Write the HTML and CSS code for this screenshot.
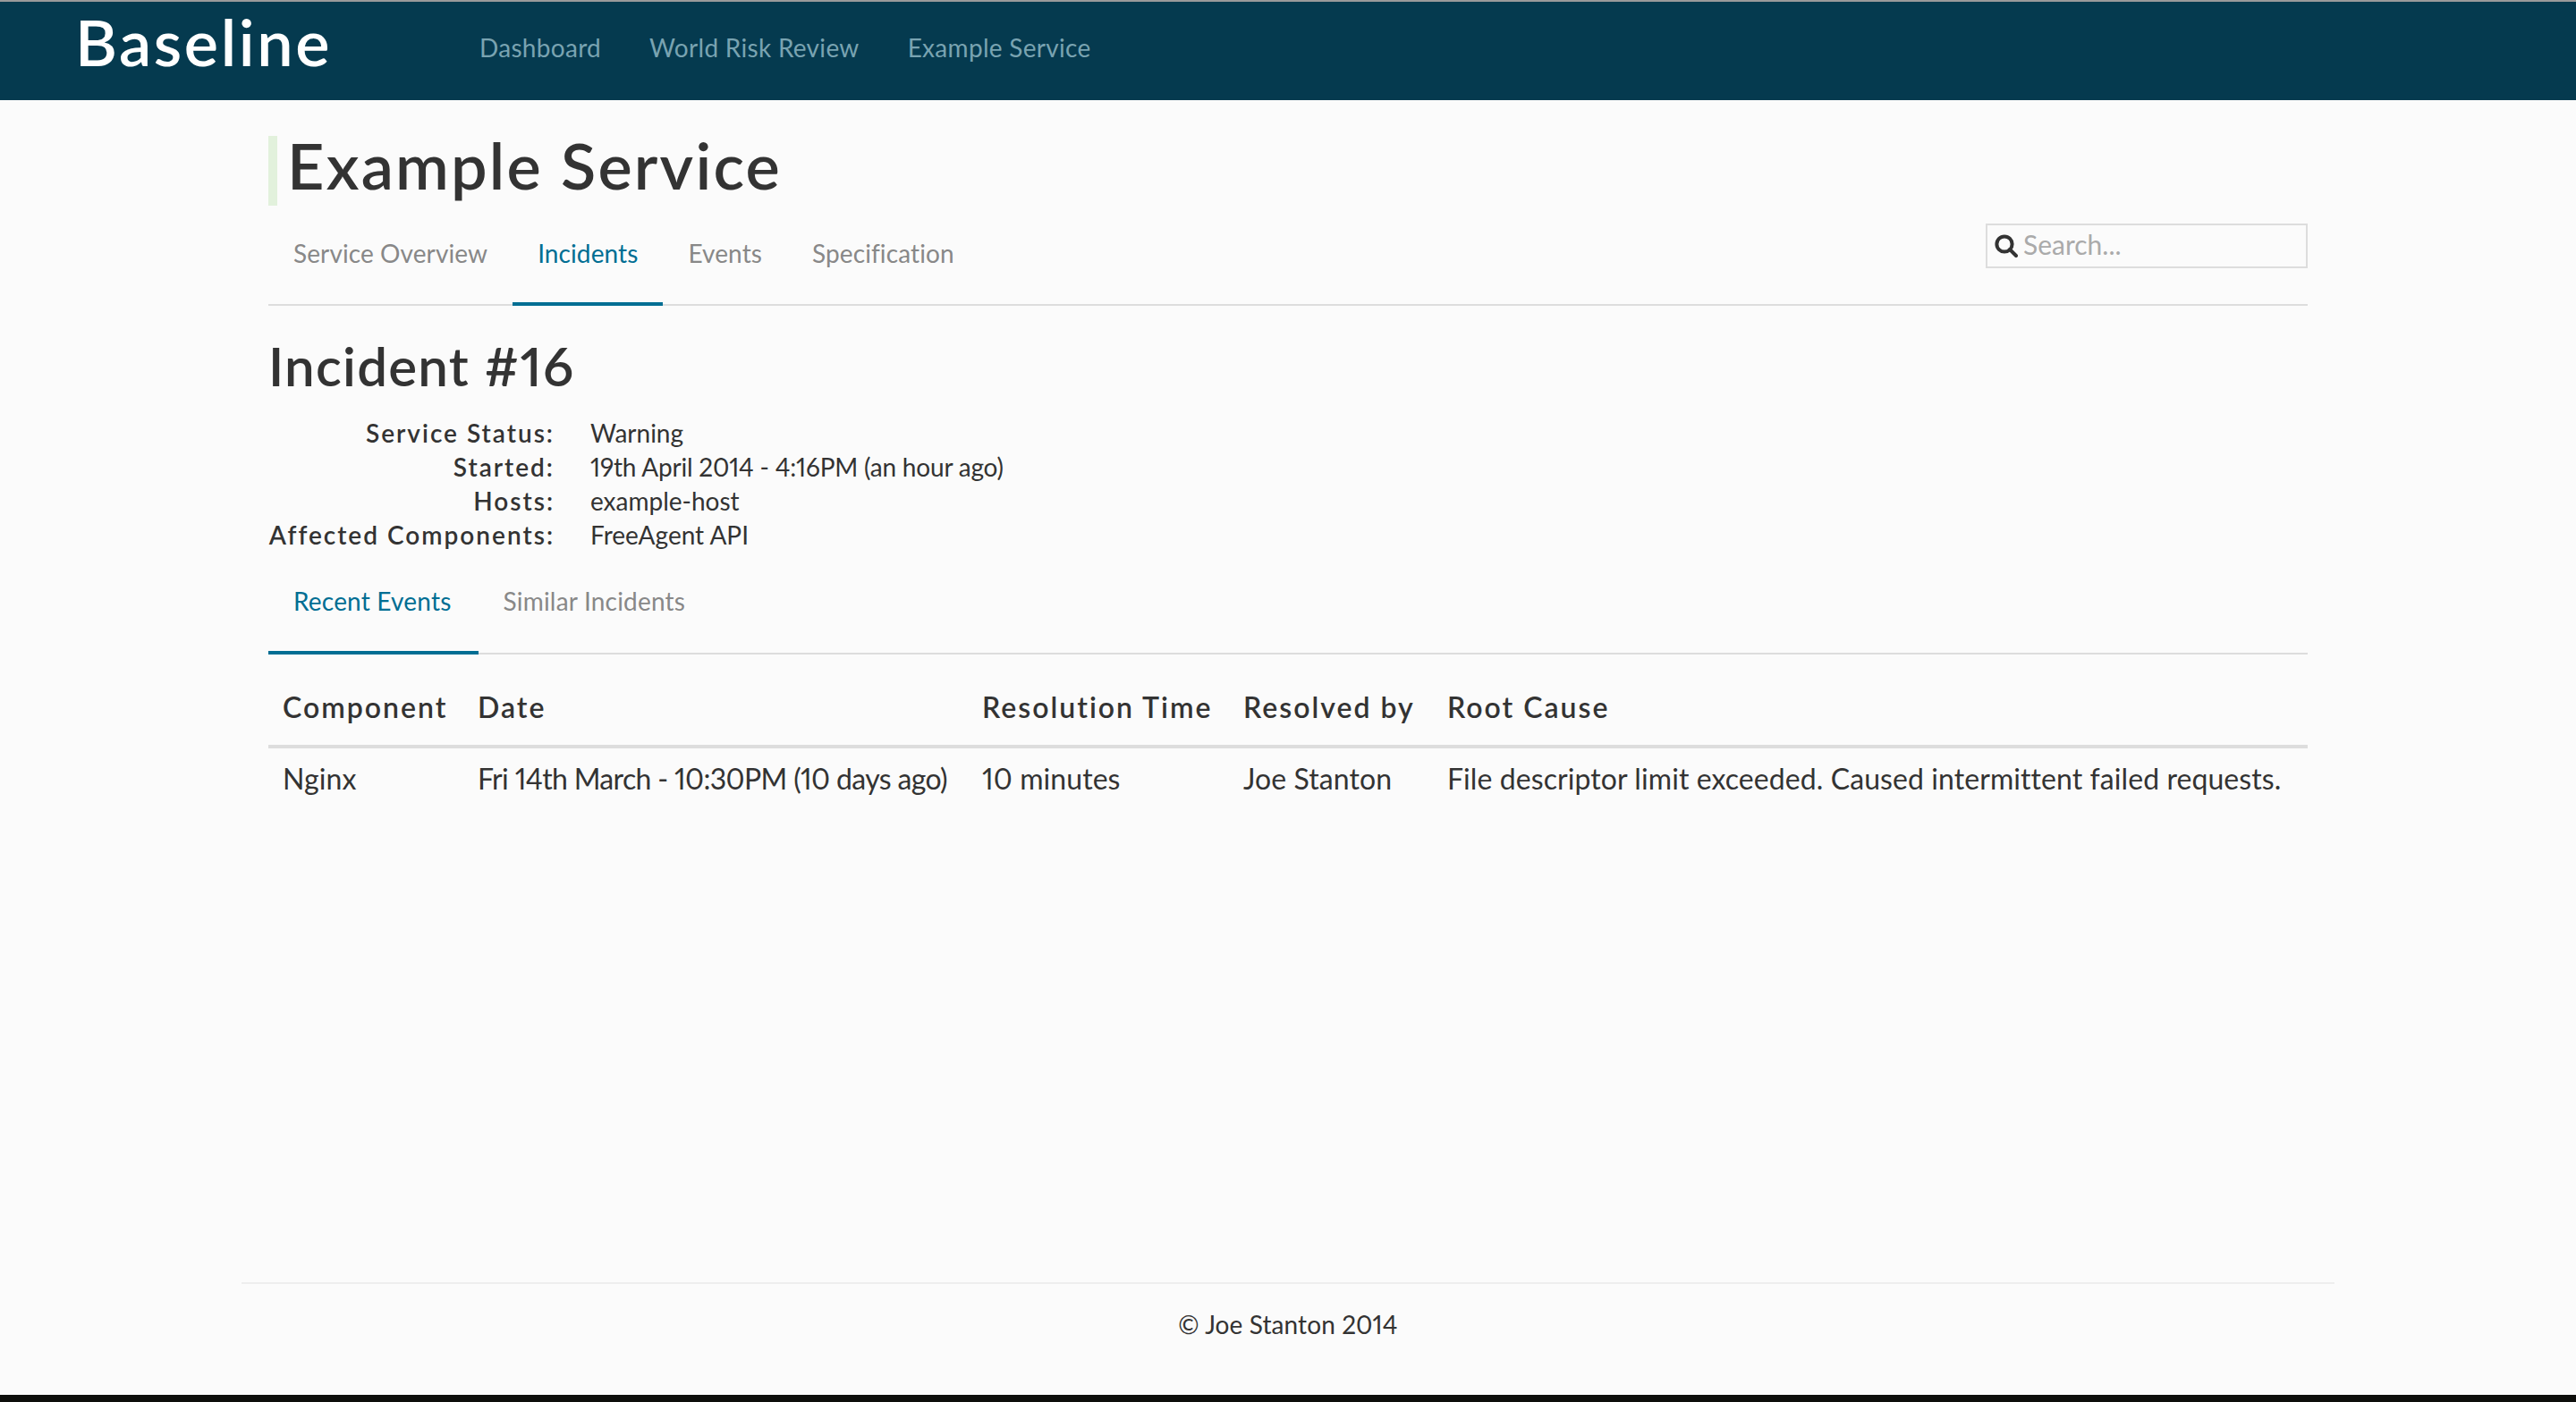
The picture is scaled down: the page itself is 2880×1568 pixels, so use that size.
FILE: index.html
```html
<!DOCTYPE html>
<html lang="en">
<head>
    <meta charset="UTF-8">
    <meta name="viewport" content="width=device-width, initial-scale=1.0">
    <title>Baseline</title>
    <link rel="stylesheet" href="styles.css">
</head>
<body>
    <header class="topbar">
        <a href="#" class="brand">Baseline</a>
        <nav class="topnav">
            <a href="#">Dashboard</a>
            <a href="#">World Risk Review</a>
            <a href="#">Example Service</a>
        </nav>
    </header>

    <main class="container">
        <h1 class="service-title">Example Service</h1>

        <div class="tabs service-tabs">
            <a href="#" class="tab">Service Overview</a>
            <a href="#" class="tab active">Incidents</a>
            <a href="#" class="tab">Events</a>
            <a href="#" class="tab">Specification</a>
            <div class="search">
                <svg class="search-icon" viewBox="0 0 26 26" aria-hidden="true">
                    <circle cx="11" cy="11" r="8.6" fill="none" stroke="#333" stroke-width="4"/>
                    <path d="M17 17l7 7" fill="none" stroke="#333" stroke-width="4" stroke-linecap="round"/>
                </svg>
                <input type="text" class="search-input" placeholder="Search...">
            </div>
        </div>

        <h2 class="incident-title">Incident #16</h2>

        <dl class="details">
            <dt>Service Status:</dt>
            <dd>Warning</dd>
            <dt>Started:</dt>
            <dd class="date-text">19th April 2014 - 4:16PM (an hour ago)</dd>
            <dt>Hosts:</dt>
            <dd>example-host</dd>
            <dt>Affected Components:</dt>
            <dd>FreeAgent API</dd>
        </dl>

        <div class="tabs incident-tabs">
            <a href="#" class="tab active">Recent Events</a>
            <a href="#" class="tab">Similar Incidents</a>
        </div>

        <table class="events">
            <thead>
                <tr>
                    <th class="col-component">Component</th>
                    <th class="col-date">Date</th>
                    <th class="col-time">Resolution Time</th>
                    <th class="col-by">Resolved by</th>
                    <th>Root Cause</th>
                </tr>
            </thead>
            <tbody>
                <tr>
                    <td>Nginx</td>
                    <td class="event-date">Fri 14th March - 10:30PM (10 days ago)</td>
                    <td>10 minutes</td>
                    <td>Joe Stanton</td>
                    <td>File descriptor limit exceeded. Caused intermittent failed requests.</td>
                </tr>
            </tbody>
        </table>
    </main>

    <footer class="footer">© Joe Stanton 2014</footer>
</body>
</html>
```

FILE: styles.css
```css
* {
    box-sizing: border-box;
}
body {
    display: flex;
    flex-direction: column;
    min-height: 100vh;
    margin: 0;
    border-bottom: 8px solid #0e0f0c;
    background-color: #fbfbfb;
    color: #333;
    font-family: Lato, "Open Sans", sans-serif;
    font-size: 28px;
    font-variant-numeric: proportional-nums;
}
a {
    text-decoration: none;
}

.topbar {
    display: flex;
    align-items: flex-start;
    height: 112px;
    padding-left: 84px;
    border-top: 2px solid #9a9a9a;
    background-color: #053a4f;
}
.brand {
    width: 452px;
    color: white;
    font-size: 72px;
    font-weight: 600;
    letter-spacing: 2.6px;
    line-height: 88px;
}
.topnav {
    display: flex;
    gap: 54px;
    padding-top: 33px;
    letter-spacing: 0.3px;
    line-height: 36px;
}
.topnav a {
    color: #79a3b1;
}

.container {
    width: 2280px;
    margin: 0 auto;
}
.service-title {
    margin: 40px 0 0;
    padding: 0 0 14px 11px;
    border-left: 10px solid #e2f1dc;
    font-size: 72px;
    font-weight: 600;
    letter-spacing: 2.2px;
    line-height: 64px;
}

.tabs {
    display: flex;
    border-bottom: 2px solid #ddd;
    letter-spacing: 0.1px;
}
.tab {
    margin-bottom: -2px;
    padding: 0 28px;
    border-bottom: 4px solid transparent;
    color: #888;
}
.tab.active {
    border-bottom-color: #006e93;
    color: #006e93;
}
.service-tabs {
    height: 112px;
    line-height: 106px;
}
.service-tabs .tab {
    height: 112px;
}
.incident-tabs {
    height: 94px;
    margin-top: 21px;
    letter-spacing: 0.2px;
    line-height: 68px;
}
.incident-tabs .tab {
    height: 94px;
}
.incident-tabs .tab.active {
    padding-right: 30px;
}

.search {
    display: flex;
    align-items: center;
    width: 360px;
    height: 50px;
    margin: 20px 0 0 auto;
    padding-left: 8px;
    border: 2px solid #ddd;
}
.search-icon {
    flex: none;
    width: 26px;
    height: 26px;
}
.search-input {
    width: 300px;
    margin-bottom: 5px;
    padding: 0 0 0 6px;
    border: 0;
    background: none;
    color: #333;
    font-family: inherit;
    font-size: 30px;
}
.search-input::placeholder {
    color: #aaa;
}

.incident-title {
    margin: 35px 0 0;
    font-size: 60px;
    font-weight: 600;
    letter-spacing: 1.25px;
    line-height: 64px;
}

.details {
    display: grid;
    grid-template-columns: 320px 1fr;
    column-gap: 40px;
    margin: 24px 0 0;
    line-height: 38px;
}
.details dt {
    font-weight: 600;
    letter-spacing: 2px;
    text-align: right;
    white-space: nowrap;
}
.details dd {
    margin: 0;
}
.details .date-text {
    letter-spacing: -0.2px;
}

.events {
    width: 100%;
    margin-top: 15px;
    border-collapse: collapse;
    table-layout: fixed;
    font-size: 32px;
}
.events th {
    height: 88px;
    padding: 0 16px;
    border-bottom: 4px solid #ddd;
    font-weight: 600;
    letter-spacing: 2px;
    text-align: left;
}
.events td {
    height: 69px;
    padding: 0 16px;
    letter-spacing: 0.08px;
    white-space: nowrap;
}
.events .event-date {
    letter-spacing: -0.65px;
}
.col-component {
    width: 218px;
}
.col-date {
    width: 564px;
}
.col-time {
    width: 292px;
}
.col-by {
    width: 228px;
}

.footer {
    width: 2340px;
    margin: auto auto 0;
    padding: 26px 0 60px;
    border-top: 2px solid #eee;
    letter-spacing: 0.1px;
    line-height: 38px;
    text-align: center;
}
```
